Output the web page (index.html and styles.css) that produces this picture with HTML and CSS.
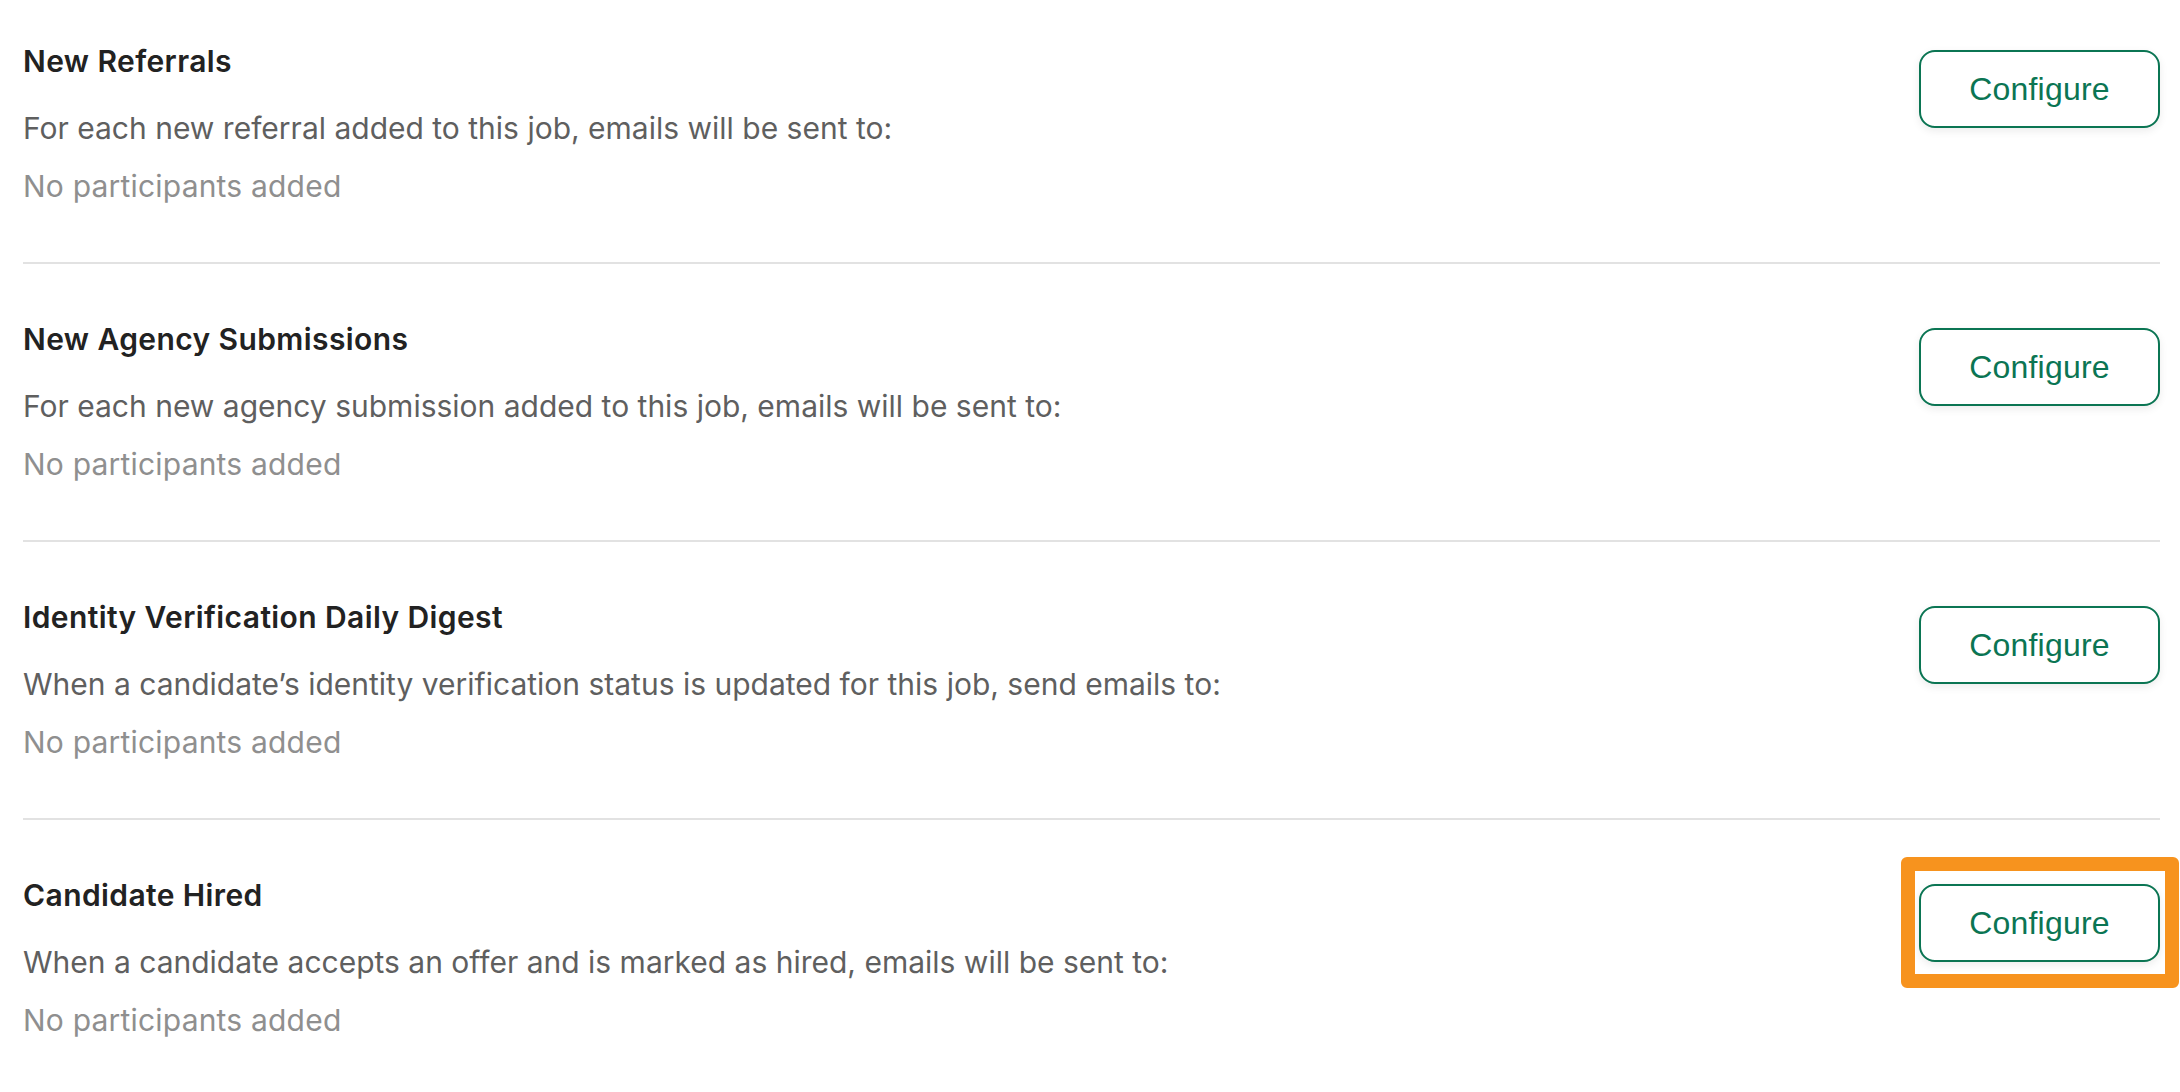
FILE: index.html
```html
<!DOCTYPE html>
<html lang="en">
<head>
  <meta charset="UTF-8" />
  <meta name="viewport" content="width=device-width, initial-scale=1.0"/>
  <title>Job Notifications</title>
<link rel="stylesheet" href="styles.css"></head>
<body>
  <div class="container">
    <div class="notifications">

      <div class="row">
        <div class="info">
          <h3>New Referrals</h3>
          <p class="desc">For each new referral added to this job, emails will be sent to:</p>
          <p class="empty">No participants added</p>
        </div>
        <div class="action">
          <button class="configure">Configure</button>
        </div>
      </div>

      <div class="row">
        <div class="info">
          <h3>New Agency Submissions</h3>
          <p class="desc">For each new agency submission added to this job, emails will be sent to:</p>
          <p class="empty">No participants added</p>
        </div>
        <div class="action">
          <button class="configure">Configure</button>
        </div>
      </div>

      <div class="row">
        <div class="info">
          <h3>Identity Verification Daily Digest</h3>
          <p class="desc">When a candidate’s identity verification status is updated for this job, send emails to:</p>
          <p class="empty">No participants added</p>
        </div>
        <div class="action">
          <button class="configure">Configure</button>
        </div>
      </div>

      <div class="row">
        <div class="info">
          <h3>Candidate Hired</h3>
          <p class="desc">When a candidate accepts an offer and is marked as hired, emails will be sent to:</p>
          <p class="empty">No participants added</p>
        </div>
        <div class="action highlighted">
          <button class="configure">Configure</button>
        </div>
      </div>

    </div>
  </div>
</body>
</html>
```

FILE: styles.css
```css
body {
  margin: 0;
  padding: 0;
  background: #fff;
  font-family: Inter, 'Liberation Sans', sans-serif;
  color: #222;
}

.container {
  padding: 0 20px 0 23px;
}

/* page is scrolled a little, first row sits partly above the fold */
.notifications {
  margin-top: -14px;
}

.row {
  display: flex;
  justify-content: space-between;
  align-items: flex-start;
  padding: 55px 0 56px;
  border-bottom: 2px solid #e2e2e2;
}

.row:last-child {
  border-bottom: none;
}

.info h3 {
  margin: 0;
  font-size: 30px;
  line-height: 40px;
  font-weight: 600;
  letter-spacing: 0.4px;
  color: #222;
}

.info p {
  margin: 0;
  font-size: 30px;
  line-height: 40px;
}

.info .desc {
  margin-top: 27px;
  color: #5f5f5f;
}

.info .empty {
  margin-top: 18px;
  color: #8f8f8f;
  letter-spacing: 0.2px;
}

.action {
  position: relative;
  margin-top: 9px;
}

.configure {
  width: 241px;
  height: 78px;
  background: #fff;
  color: #0b7553;
  border: 2px solid #0b7553;
  border-radius: 16px;
  font-family: 'Liberation Sans', Arial, sans-serif;
  font-size: 32px;
  letter-spacing: 0.2px;
  box-shadow: 0 3px 8px rgba(0,0,0,0.08);
  cursor: pointer;
}

.highlighted::after {
  content: "";
  position: absolute;
  top: -27px;
  left: -18px;
  right: -19px;
  bottom: -26px;
  border: 14px solid #f7931e;
  border-radius: 6px;
  pointer-events: none;
}
```
